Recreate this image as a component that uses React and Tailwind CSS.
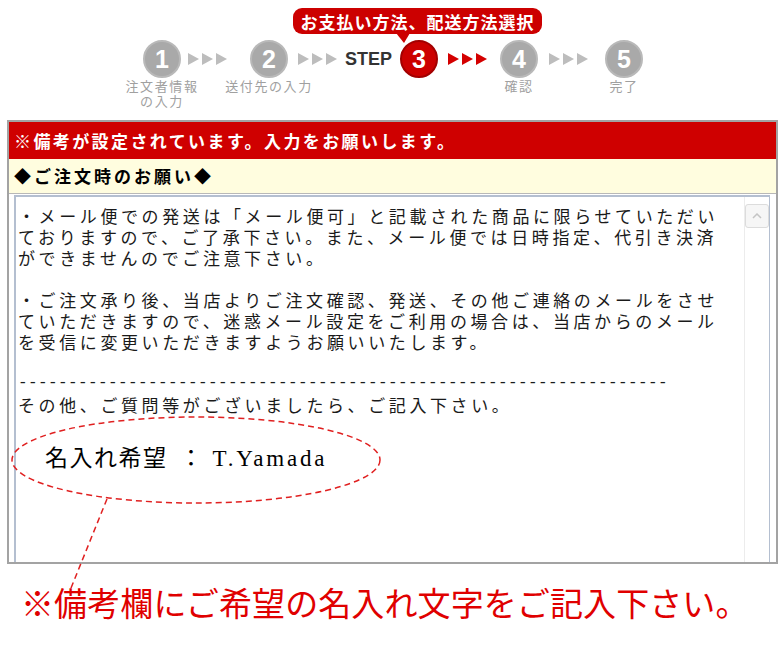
import React from "react";

const jp = { fontFamily: '"Noto Sans CJK JP", sans-serif' };

function Arrows({ color }) {
  return (
    <svg width="40" height="12" viewBox="0 0 40 12">
      <polygon points="0,0 11,6 0,12" fill={color} />
      <polygon points="14,0 25,6 14,12" fill={color} />
      <polygon points="28,0 39,6 28,12" fill={color} />
    </svg>
  );
}

function Step({ n, label, active }) {
  return (
    <div className="flex flex-col items-center w-[38px]">
      <div
        className={
          "w-[38px] h-[38px] rounded-full flex items-center justify-center text-white font-bold text-[25px] leading-none " +
          (active ? "bg-[#cc0000] border-2 border-[#a30000]" : "bg-[#a9a9a9] border-2 border-[#b9b9b9]")
        }
        style={{ fontFamily: '"Liberation Sans", Arial, sans-serif' }}
      >
        {n}
      </div>
      {label && (
        <div className="whitespace-nowrap text-center text-[13px] leading-[15px] tracking-[1.6px] text-[#a0a0a0]" style={jp}>
          {label.map((l, i) => (
            <div key={i}>{l}</div>
          ))}
        </div>
      )}
    </div>
  );
}

const lines = [
  "・メール便での発送は「メール便可」と記載された商品に限らせていただい",
  "ておりますので、ご了承下さい。また、メール便では日時指定、代引き決済",
  "ができませんのでご注意下さい。",
  "",
  "・ご注文承り後、当店よりご注文確認、発送、その他ご連絡のメールをさせ",
  "ていただきますので、迷惑メール設定をご利用の場合は、当店からのメール",
  "を受信に変更いただきますようお願いいたします。",
  "",
];

export default function App() {
  return (
    <div className="relative w-[780px] h-[647px] bg-white overflow-hidden">
      {/* Step header */}
      <div className="h-[120px] flex flex-col">
        <div className="relative mt-[8px] ml-[293px] w-[249px] h-[26px] rounded-[9px] bg-[#cc0000] flex items-center justify-center">
          <span className="text-white font-bold text-[17px] leading-none tracking-[1px]" style={jp}>
            お支払い方法、配送方法選択
          </span>
          <svg className="absolute left-[103px] top-[25px]" width="14" height="10" viewBox="0 0 14 10">
            <polygon points="0,0 14,0 8,10" fill="#cc0000" />
          </svg>
        </div>
        <div className="flex items-start mt-[6px] pl-[143px]">
          <Step n="1" label={["注文者情報", "の入力"]} />
          <div className="ml-[7px] mt-[13px]"><Arrows color="#bdbdbd" /></div>
          <div className="ml-[22px]"><Step n="2" label={["送付先の入力"]} /></div>
          <div className="ml-[10px] mt-[13px]"><Arrows color="#bdbdbd" /></div>
          <div
            className="ml-[7px] mt-[9px] text-[18px] font-bold text-[#333] leading-[20px]"
            style={{ fontFamily: '"Liberation Sans", Arial, sans-serif' }}
          >
            STEP
          </div>
          <div className="ml-[8px]"><Step n="3" active /></div>
          <div className="ml-[10px] mt-[13px]"><Arrows color="#d40000" /></div>
          <div className="ml-[12px]"><Step n="4" label={["確認"]} /></div>
          <div className="ml-[11px] mt-[13px]"><Arrows color="#bdbdbd" /></div>
          <div className="ml-[16px]"><Step n="5" label={["完了"]} /></div>
        </div>
      </div>

      {/* Main box */}
      <div className="ml-[7px] w-[771px] h-[444px] border-2 border-[#a3a3a3] flex flex-col">
        <div className="h-[37px] bg-[#cf0000] flex items-center pl-[5px]">
          <span className="text-white font-bold text-[17px] tracking-[2.4px]" style={jp}>
            ※備考が設定されています。入力をお願いします。
          </span>
        </div>
        <div className="h-[35px] bg-[#fffddf] border-b border-[#b8b8b8] flex items-center pl-[5px]">
          <span className="text-black font-bold text-[17px] tracking-[3px]" style={jp}>
            ◆ご注文時のお願い◆
          </span>
        </div>
        <div className="flex-1 flex ml-[5px] mr-[6px] mt-[1px] border-l-2 border-t-2 border-r border-[#b4bfd0] bg-white">
          <div className="flex-1 pl-[2px] pt-[8px] text-[17px] leading-[21px] tracking-[3.6px] text-[#1a1a1a]" style={jp}>
            {lines.map((l, i) => (
              <div key={i} className="h-[21px] whitespace-nowrap">{l}</div>
            ))}
            <div
              className="h-[21px] whitespace-nowrap text-[16px] tracking-[0.4px]"
              style={{ fontFamily: '"Liberation Mono", monospace' }}
            >
              {"-".repeat(65)}
            </div>
            <div className="h-[21px] whitespace-nowrap">その他、ご質問等がございましたら、ご記入下さい。</div>
          </div>
          <div className="w-[25px] border-l border-[#ececec] flex flex-col items-center">
            <div className="mt-[7px] w-[24px] h-[24px] rounded-[3px] border border-[#dcdcdc] bg-[#f6f6f6] flex items-center justify-center">
              <svg width="10" height="6" viewBox="0 0 10 6">
                <polyline points="1,5 5,1 9,5" fill="none" stroke="#c4c4c4" strokeWidth="1.5" />
              </svg>
            </div>
          </div>
        </div>
      </div>

      {/* Bottom note */}
      <div
        className="mt-[21px] pl-[21px] text-[33px] leading-[40px] tracking-[0.1px] text-[#e00000] whitespace-nowrap"
        style={{ fontFamily: '"Liberation Serif", "Noto Sans CJK JP", serif' }}
      >
        ※備考欄にご希望の名入れ文字をご記入下さい。
      </div>

      {/* Annotation overlay */}
      <svg className="absolute left-0 top-0 pointer-events-none" width="780" height="647" viewBox="0 0 780 647">
        <ellipse cx="196" cy="460" rx="184" ry="43" fill="none" stroke="#e02020" strokeWidth="1.5" strokeDasharray="6 4" />
        <line x1="107" y1="499" x2="71" y2="588" stroke="#e02020" strokeWidth="1.5" strokeDasharray="6 4" />
      </svg>
      <div
        className="absolute left-[45px] top-[445px] flex items-baseline text-[23px] leading-[28px] text-black whitespace-nowrap"
        style={{ fontFamily: '"Liberation Serif", "Noto Sans CJK JP", serif' }}
      >
        <span className="tracking-[1.5px]">名入れ希望</span>
        <span className="ml-[12px]">：</span>
        <span className="ml-[10px] tracking-[2.8px]">T.Yamada</span>
      </div>
    </div>
  );
}
